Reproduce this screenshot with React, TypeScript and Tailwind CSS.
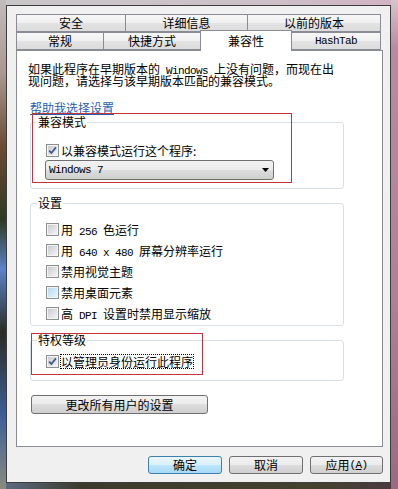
import type { ReactNode } from 'react';

// latin runs: SimSun-like half width (6px per char)
function L({ children }: { children: ReactNode }) {
  return (
    <span className="font-['Liberation_Mono',monospace] text-[11px] leading-[8px] tracking-[-0.6px]">{children}</span>
  );
}

function Check({ checked = false, hot = false }: { checked?: boolean; hot?: boolean }) {
  return (
    <span className="flex h-[13px] w-[13px] shrink-0 border border-[#8e8f8f] bg-[#f4f4f4] p-px">
      <span
        className={`flex flex-1 items-center justify-center ${
          hot
            ? 'bg-[linear-gradient(135deg,#b5dcf4,#e6f4fc)]'
            : 'bg-[linear-gradient(135deg,#c9ccd1,#f3f3f3)]'
        }`}
      >
        {checked && (
          <svg width="9" height="9" viewBox="0 0 9 9">
            <path d="M1.2 4.6 L3.4 7 L7.9 1.4" fill="none" stroke="#3b5587" strokeWidth="1.7" />
          </svg>
        )}
      </span>
    </span>
  );
}

function Row({ children, checked, hot }: { children: ReactNode; checked?: boolean; hot?: boolean }) {
  return (
    <div className="flex h-[21px] items-center gap-[2px]">
      <Check checked={checked} hot={hot} />
      <span className="leading-[13px]">{children}</span>
    </div>
  );
}

function Btn({ children, w, primary = false }: { children: ReactNode; w: string; primary?: boolean }) {
  return (
    <div
      className={`flex h-[18px] items-center justify-center rounded-[3px] border leading-[12px] ${w} ${
        primary
          ? 'border-[#3c7fb1] bg-[linear-gradient(#eaf6fd,#d9f0fc_50%,#bee6fd_50%,#a7d9f5)]'
          : 'border-[#707070] bg-[linear-gradient(#f2f2f2,#ebebeb_50%,#dddddd_50%,#cfcfcf)]'
      }`}
    >
      {children}
    </div>
  );
}

const tabCls =
  'flex h-[18px] items-center justify-center border border-[#898c95] bg-[linear-gradient(#f7f7f7,#efefef_50%,#e3e3e3_50%,#dcdcdc)] leading-[12px]';

export default function App() {
  return (
    <div className="flex h-[489px] w-[398px] overflow-hidden font-['Noto_Sans_CJK_SC',sans-serif] text-[12px] leading-[13px] text-black">
      {/* glass frame, left */}
      <div className="w-[6px] bg-[linear-gradient(#c2bcbc,#a89890_15%,#6b4a35_30%,#2e3a22_45%,#5a82c8_55%,#2c2c26_68%,#3d5e96_85%,#8a8a80)]" />

      <div className="flex w-[385px] flex-col">
        <div className="h-[5px] bg-[linear-gradient(90deg,#c9c6c8,#cdbfc7_70%,#d2b3c4)]" />

        {/* dialog */}
        <div className="h-[478px] border border-[#3d3d3d] bg-[#f0f0f0] pl-[9px] pt-[8px]">
          <div className="w-[367px]">
            {/* tabs */}
            <div className="flex h-[18px]">
              <div className={`${tabCls} w-[110px]`}>安全</div>
              <div className={`${tabCls} -ml-px w-[123px]`}>详细信息</div>
              <div className={`${tabCls} -ml-px w-[134px]`}>以前的版本</div>
            </div>
            <div className="flex h-[18px] items-end">
              <div className={`${tabCls} w-[88px]`}>常规</div>
              <div className={`${tabCls} -ml-px w-[98px]`}>快捷方式</div>
              <div className="relative z-10 -mb-px -ml-px flex h-[21px] w-[92px] items-center justify-center border border-b-0 border-[#898c95] bg-white leading-[12px]">
                兼容性
              </div>
              <div className={`${tabCls} -ml-px w-[90px]`}>
                <L>HashTab</L>
              </div>
            </div>

            {/* panel */}
            <div className="relative h-[397px] border border-[#898c95] bg-white">
              <div className="ml-[11px] mt-[12px] leading-[12px]">
                <div>
                  如果此程序在早期版本的<L>{' Windows '}</L>上没有问题，而现在出
                </div>
                <div>现问题，请选择与该早期版本匹配的兼容模式。</div>
              </div>

              <div className="ml-[13px] mt-[15px] w-fit leading-[12px] text-[#2a5db0] underline underline-offset-[1px]">
                帮助我选择设置
              </div>

              <fieldset className="ml-[13px] mt-[2px] w-[314px] rounded-[3px] border border-[#d5dfe5] pb-[8px]">
                <legend className="ml-[6px] px-px leading-[12px]">兼容模式</legend>
                <div className="pl-[14px]">
                  <div className="ml-px mt-[16px] flex h-[13px] items-center gap-[2px]">
                    <Check checked />
                    <span>以兼容模式运行这个程序:</span>
                  </div>
                  <div className="mt-[3px] flex h-[20px] w-[229px] items-center justify-between rounded-[3px] border border-[#707070] bg-[linear-gradient(#f2f2f2,#ebebeb_50%,#dddddd_50%,#cfcfcf)] pl-[3px] pr-[4px]">
                    <L>Windows 7</L>
                    <svg width="7" height="4" viewBox="0 0 7 4">
                      <path d="M0 0H7L3.5 4Z" fill="#000" />
                    </svg>
                  </div>
                </div>
              </fieldset>

              <fieldset className="ml-[13px] mt-[8px] w-[314px] rounded-[3px] border border-[#d5dfe5] pb-px">
                <legend className="ml-[6px] px-px leading-[12px]">设置</legend>
                <div className="pl-[15px] pt-[10px]">
                  <Row>
                    用<L>{' 256 '}</L>色运行
                  </Row>
                  <Row>
                    用<L>{' 640 x 480 '}</L>屏幕分辨率运行
                  </Row>
                  <Row>禁用视觉主题</Row>
                  <Row hot>禁用桌面元素</Row>
                  <Row>
                    高<L>{' DPI '}</L>设置时禁用显示缩放
                  </Row>
                </div>
              </fieldset>

              <fieldset className="ml-[13px] mt-[8px] w-[314px] rounded-[3px] border border-[#d5dfe5] pb-[8px]">
                <legend className="ml-[6px] px-px leading-[12px]">特权等级</legend>
                <div className="pl-[15px] pt-[5px]">
                  <div className="flex h-[21px] items-center gap-px">
                    <Check checked />
                    <span className="border border-dotted border-black leading-[13px]">以管理员身份运行此程序</span>
                  </div>
                </div>
              </fieldset>

              <div className="ml-[14px] mt-[14px]">
                <div className="flex h-[19px] w-[177px] items-center justify-center rounded-[3px] border border-[#707070] bg-[linear-gradient(#f2f2f2,#ebebeb_50%,#dddddd_50%,#cfcfcf)] leading-[12px]">
                  更改所有用户的设置
                </div>
              </div>

              {/* red annotation boxes */}
              <div className="absolute left-[15px] top-[62px] h-[70px] w-[260px] border border-[#c8323c]" />
              <div className="absolute left-[14px] top-[282px] h-[42px] w-[172px] border border-[#c8323c]" />
            </div>

            {/* dialog buttons */}
            <div className="mt-[9px] flex justify-end gap-[7px]">
              <Btn w="w-[74px]" primary>
                确定
              </Btn>
              <Btn w="w-[74px]">取消</Btn>
              <Btn w="w-[73px]">
                应用<L>
                  (<span className="underline">A</span>)
                </L>
              </Btn>
            </div>
          </div>
        </div>

        <div className="h-[6px] bg-[linear-gradient(90deg,#5a6a80,#3b3a2c_20%,#45412f_80%,#4a3a40)]" />
      </div>

      {/* glass frame, right */}
      <div className="w-[7px] bg-[linear-gradient(#d6c4cc,#b98aa2_10%,#b27f99_60%,#9a6a80)]" />
    </div>
  );
}
